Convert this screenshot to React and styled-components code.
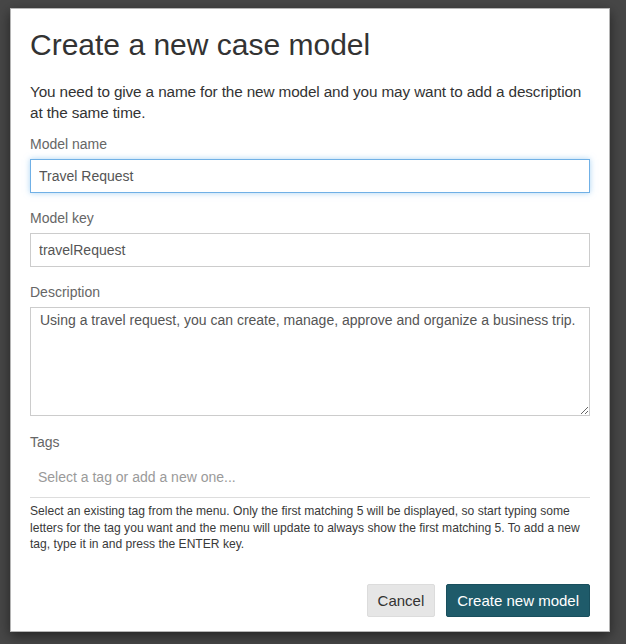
import styled, { createGlobalStyle } from "styled-components";

const GlobalStyle = createGlobalStyle`
  html, body {
    margin: 0;
    padding: 0;
    background: #474747;
    font-family: "Liberation Sans", Arial, sans-serif;
  }
  * {
    box-sizing: border-box;
  }
`;

const Backdrop = styled.div`
  width: 626px;
  height: 644px;
  padding: 8px 16px 0 10px;
  background-color: #474747;
`;

const Modal = styled.div`
  width: 600px;
  height: 624px;
  background: #fff;
  border: 1px solid #b5b5b5;
  box-shadow: 0 4px 12px rgba(0, 0, 0, 0.5);
  padding: 16px 19px 14px 19px;
  display: flex;
  flex-direction: column;
`;

const Title = styled.h1`
  margin: 0 0 16px;
  font-size: 30px;
  font-weight: 400;
  line-height: 40px;
  color: #333;
`;

const Intro = styled.p`
  margin: 0 0 11px;
  font-size: 15.3px;
  letter-spacing: -0.12px;
  line-height: 21px;
  color: #333;
`;

const Field = styled.div`
  display: flex;
  flex-direction: column;
  margin-bottom: ${({ gap }) => (gap === undefined ? 15 : gap)}px;
`;

const Label = styled.label`
  font-size: 14px;
  line-height: 20px;
  color: #666;
  margin-bottom: 5px;
`;

const TextInput = styled.input`
  height: 34px;
  width: 100%;
  padding: 0 8px;
  font-family: inherit;
  font-size: 14px;
  color: #555;
  background: #fff;
  border: 1px solid ${({ focused }) => (focused ? "#70b0e6" : "#ccc")};
  border-radius: 0;
  outline: none;
  box-shadow: ${({ focused }) =>
    focused ? "0 0 6px rgba(102, 175, 233, 0.55)" : "none"};
`;

const TextArea = styled.textarea`
  height: 109px;
  width: 100%;
  padding: 4px 9px;
  font-family: inherit;
  font-size: 14px;
  line-height: 16px;
  color: #555;
  border: 1px solid #ccc;
  border-radius: 0;
  outline: none;
  resize: vertical;
`;

const TagInput = styled.input`
  height: 41px;
  width: 100%;
  padding: 0 8px;
  font-family: inherit;
  font-size: 14px;
  color: #555;
  border: none;
  border-bottom: 1px solid #ddd;
  outline: none;
  &::placeholder {
    color: #9a9a9a;
  }
`;

const Help = styled.p`
  margin: 5px 0 0;
  font-size: 12.1px;
  line-height: 16.5px;
  color: #3a3a3a;
`;

const Footer = styled.div`
  margin-top: auto;
  display: flex;
  justify-content: flex-end;
  gap: 11px;
`;

const Button = styled.button`
  height: 33px;
  padding: 0 10px;
  font-family: inherit;
  font-size: 15px;
  border-radius: 2px;
  border: 1px solid ${({ primary }) => (primary ? "#194f5d" : "#dcdcdc")};
  background: ${({ primary }) => (primary ? "#1f5b6a" : "#e6e6e6")};
  color: ${({ primary }) => (primary ? "#fff" : "#333")};
  cursor: pointer;
`;

export default function App() {
  return (
    <>
      <GlobalStyle />
      <Backdrop>
        <Modal>
          <Title>Create a new case model</Title>
          <Intro>
            You need to give a name for the new model and you may want to add a
            description at the same time.
          </Intro>
          <Field>
            <Label>Model name</Label>
            <TextInput focused defaultValue="Travel Request" />
          </Field>
          <Field>
            <Label>Model key</Label>
            <TextInput defaultValue="travelRequest" />
          </Field>
          <Field gap={16}>
            <Label>Description</Label>
            <TextArea defaultValue="Using a travel request, you can create, manage, approve and organize a business trip." />
          </Field>
          <Field gap={0}>
            <Label>Tags</Label>
            <TagInput placeholder="Select a tag or add a new one..." />
            <Help>
              Select an existing tag from the menu. Only the first matching 5
              will be displayed, so start typing some letters for the tag you
              want and the menu will update to always show the first matching 5.
              To add a new tag, type it in and press the ENTER key.
            </Help>
          </Field>
          <Footer>
            <Button>Cancel</Button>
            <Button primary>Create new model</Button>
          </Footer>
        </Modal>
      </Backdrop>
    </>
  );
}
